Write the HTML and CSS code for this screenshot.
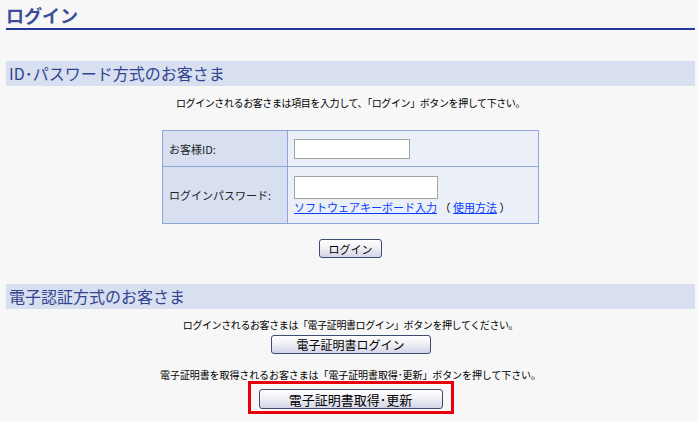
FILE: index.html
```html
<!DOCTYPE html>
<html lang="ja">
<head>
    <meta charset="UTF-8">
    <meta name="viewport" content="width=device-width, initial-scale=1.0">
    <title>ログイン</title>
    <link rel="stylesheet" href="styles.css">
</head>
<body>
    <div class="page">
        <h1 class="title">ログイン</h1>

        <h2 class="section">ID･パスワード方式のお客さま</h2>
        <p class="note">ログインされるお客さまは項目を入力して、「ログイン」ボタンを押して下さい。</p>

        <form id="loginForm">
            <table class="form-table">
                <tr class="row-id">
                    <th>お客様ID:</th>
                    <td><input type="text" class="input-id"></td>
                </tr>
                <tr class="row-pw">
                    <th>ログインパスワード:</th>
                    <td>
                        <input type="password" class="input-pw"><br>
                        <a href="#">ソフトウェアキーボード入力</a> （ <a href="#">使用方法</a> ）
                    </td>
                </tr>
            </table>
            <div class="actions">
                <button type="submit" class="btn btn-login">ログイン</button>
            </div>
        </form>

        <h2 class="section section-cert">電子認証方式のお客さま</h2>
        <p class="note note-cert">ログインされるお客さまは「電子証明書ログイン」ボタンを押してください。</p>
        <div class="actions">
            <button type="button" class="btn btn-cert">電子証明書ログイン</button>
        </div>
        <p class="note note-get">電子証明書を取得されるお客さまは「電子証明書取得･更新」ボタンを押して下さい。</p>
        <div class="actions">
            <div class="highlight">
                <button type="button" class="btn btn-get">電子証明書取得･更新</button>
            </div>
        </div>
    </div>
</body>
</html>
```

FILE: styles.css
```css
body {
    font-family: "Noto Sans CJK JP", "Liberation Sans", sans-serif;
    background-color: #f7f7f7;
    margin: 0;
    padding: 0;
    color: #000;
}

.page {
    padding: 0 3px 0 6px;
}

.title {
    margin: 0;
    padding-top: 3px;
    height: 25px;
    font-size: 18px;
    line-height: 24px;
    font-weight: bold;
    color: #3b4d98;
    border-bottom: 2px solid #25399c;
}

.section {
    margin: 31px 0 0;
    height: 25px;
    padding-left: 3px;
    font-size: 16px;
    line-height: 25px;
    font-weight: normal;
    color: #33448f;
    background-color: #d7dff0;
}

.note {
    margin: 10px 0 0;
    text-align: center;
    font-size: 10px;
    line-height: 14px;
    letter-spacing: -0.4px;
}

.form-table {
    margin: 20px auto 0;
    border-collapse: collapse;
    width: 377px;
    font-size: 11px;
}

.form-table th,
.form-table td {
    border: 1px solid #8ea6d8;
    text-align: left;
    font-weight: normal;
}

.form-table th {
    width: 118px;
    padding: 0 0 0 6px;
    background-color: #d7dff0;
    color: #222;
}

.form-table td {
    padding: 0 6px;
    background-color: #ebeff7;
}

.row-id {
    height: 36px;
}

.row-pw {
    height: 57px;
}

.form-table input {
    box-sizing: border-box;
    border: 1px solid #a4a4a4;
    background: #fff;
    padding: 0 3px;
    margin: 0;
}

.input-id {
    width: 116px;
    height: 20px;
}

.input-pw {
    width: 144px;
    height: 23px;
    margin-top: 1px;
}

.form-table a {
    color: #0a3cff;
    text-decoration: underline;
    line-height: 15px;
}

.actions {
    display: flex;
    justify-content: center;
}

.btn {
    font-family: "Noto Sans CJK JP", "Liberation Sans", sans-serif;
    border: 1px solid #3f4c72;
    border-radius: 3px;
    background: linear-gradient(#ffffff, #f0f0f6 45%, #d3d5e6);
    color: #000;
    padding: 0;
    cursor: pointer;
}

.btn-login {
    margin-top: 15px;
    width: 63px;
    height: 19px;
    font-size: 11px;
    line-height: 16px;
}

.section-cert {
    margin-top: 26px;
}

.note-cert {
    margin-top: 9px;
}

.btn-cert {
    margin-top: 3px;
    width: 160px;
    height: 19px;
    font-size: 12px;
    line-height: 16px;
}

.note-get {
    margin-top: 14px;
    letter-spacing: -0.1px;
}

.highlight {
    border: 3px solid #e8000b;
    padding: 5px 8px 2px;
    margin-top: -1px;
}

.btn-get {
    display: block;
    width: 184px;
    height: 20px;
    font-size: 13px;
    line-height: 17px;
}
```
